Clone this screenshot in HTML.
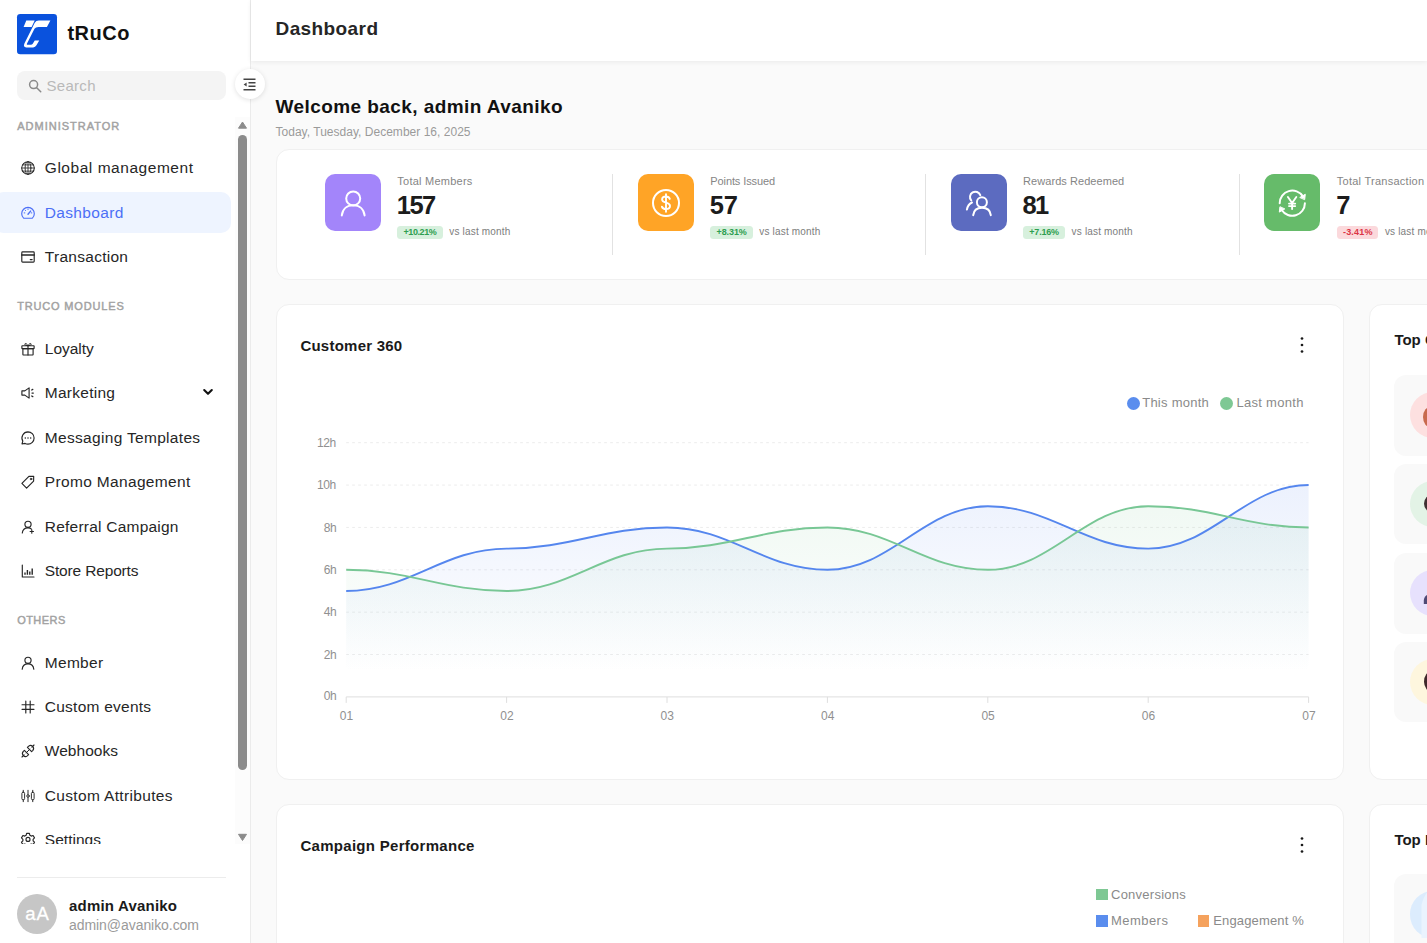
<!DOCTYPE html>
<html lang="en"><head><meta charset="utf-8"><title>tRuCo Dashboard</title>
<style>
*{box-sizing:border-box}
html,body{margin:0;padding:0}
body{width:1427px;height:943px;overflow:hidden;position:relative;background:#fafafa;font-family:"Liberation Sans",Arial,sans-serif;}
.t{position:absolute;white-space:pre;display:block}
.ic{position:absolute;display:block;overflow:visible}
#sb{position:absolute;left:0;top:0;width:251px;height:943px;background:#fff;border-right:1px solid #ebebeb;overflow:hidden}
#hd{position:absolute;left:251px;top:0;width:1176px;height:61px;background:#fff;box-shadow:0 1px 5px rgba(0,0,0,.07)}
.card{position:absolute;background:#fff;border:1px solid #f0f0f0;border-radius:13px}
</style></head>
<body>
<div id="sb">
<svg class="ic" style="left:17px;top:13.8px" width="40" height="40.300" viewBox="95 90 755 760">
<rect x="95" y="90" width="755" height="760" rx="62" fill="#0a52dd"/>
<polygon points="270,212 429,212 371,335 220,335" fill="#fff"/>
<path d="M725,212 L505,212 Q455,212 430,255 L235,645 Q205,715 270,720 L400,720 Q440,718 462,680 L515,590 L430,590 L392,650 Q382,668 355,668 L285,668 Q275,665 282,652 L425,370 Q445,335 500,335 L660,335 Z" fill="#fff"/></svg>
<span class="t" style="left:67.40px;top:18.97px;font-size:20px;line-height:28px;color:#111;font-weight:700;letter-spacing:0.504px;">tRuCo</span>
<div style="position:absolute;left:17px;top:70.600px;width:208.800px;height:29.700px;border-radius:8px;background:#f4f4f4"></div>
<svg class="ic" style="left:27.500px;top:78.500px" width="14" height="14" viewBox="0 0 14 14" fill="none" stroke="#8a8a8a" stroke-width="1.500" stroke-linecap="round"><circle cx="5.600" cy="5.600" r="4"/><path d="M8.700 8.700l4 4"/></svg>
<span class="t" style="left:46.50px;top:74.90px;font-size:15px;line-height:21px;color:#b9b9b9;letter-spacing:0.294px;">Search</span>
<span class="t" style="left:17.20px;top:118.79px;font-size:11px;line-height:15px;color:#a2a2a2;letter-spacing:1.004px;-webkit-text-stroke:.450px #a2a2a2;">ADMINISTRATOR</span>
<svg class="ic" style="left:21px;top:161.00px" width="14" height="14" viewBox="0 0 14 14" fill="none" stroke="#262626" stroke-width="1.15" stroke-linecap="round" stroke-linejoin="round"><circle cx="7" cy="7" r="6.3" stroke-width="1.050"/><ellipse cx="7" cy="7" rx="2.9" ry="6.3" stroke-width=".900"/><path d="M7 .7v12.6M.7 7h12.6M1.600 3.900h10.800M1.600 10.100h10.800" stroke-width=".850"/></svg>
<span class="t" style="left:44.80px;top:156.93px;font-size:15.5px;line-height:22px;color:#262626;letter-spacing:0.538px;">Global management</span>
<div style="position:absolute;left:-6px;top:192.1px;width:237px;height:40.800px;border-radius:10px;background:#eef4ff"></div>
<svg class="ic" style="left:21px;top:205.60px" width="14" height="14" viewBox="0 0 14 14" fill="none" stroke="#4c6ff6" stroke-width="1.15" stroke-linecap="round" stroke-linejoin="round"><path d="M2.6 12.2h8.8a6.3 6.3 0 1 0-8.8 0z"/><path d="M7 8.2l2.6-3.1" stroke-width="1.4"/><path d="M7 2.9v.6M3.2 6.9h.6M10.2 6.9h.6M4.2 4.2l.4.4" stroke-width="1"/></svg>
<span class="t" style="left:44.80px;top:201.53px;font-size:15.5px;line-height:22px;color:#4c6ff6;letter-spacing:0.334px;">Dashboard</span>
<svg class="ic" style="left:21px;top:250.00px" width="14" height="14" viewBox="0 0 14 14" fill="none" stroke="#262626" stroke-width="1.15" stroke-linecap="round" stroke-linejoin="round"><rect x=".8" y="1.9" width="12.4" height="10.2" rx=".8"/><path d="M.8 5h12.4" stroke-width="1.6"/><path d="M9.3 9.6h1.8" stroke-width="1.2"/></svg>
<span class="t" style="left:44.80px;top:245.93px;font-size:15.5px;line-height:22px;color:#262626;letter-spacing:0.279px;">Transaction</span>
<span class="t" style="left:17.20px;top:298.89px;font-size:11px;line-height:15px;color:#a2a2a2;letter-spacing:0.836px;-webkit-text-stroke:.450px #a2a2a2;">TRUCO MODULES</span>
<svg class="ic" style="left:21px;top:341.90px" width="14" height="14" viewBox="0 0 14 14" fill="none" stroke="#262626" stroke-width="1.15" stroke-linecap="round" stroke-linejoin="round"><rect x="1.9" y="6.6" width="10.2" height="6.4" rx=".4"/><rect x=".9" y="3.7" width="12.2" height="2.9" rx=".4"/><path d="M7 3.7v9.3"/><path d="M7 3.6C5.6 1 3.6 1 3.9 2.5 4.1 3.4 5.6 3.6 7 3.6 8.400 3.6 9.900 3.400 10.100 2.500 10.400 1 8.400 1 7 3.600z" stroke-width="1"/></svg>
<span class="t" style="left:44.80px;top:337.83px;font-size:15.5px;line-height:22px;color:#262626;letter-spacing:-0.021px;">Loyalty</span>
<svg class="ic" style="left:21px;top:386.00px" width="14" height="14" viewBox="0 0 14 14" fill="none" stroke="#262626" stroke-width="1.15" stroke-linecap="round" stroke-linejoin="round"><path d="M.9 4.9h2.9l4.300-3v10.200l-4.300-3H.9z"/><path d="M11 7h1.300M10.700 4l1.100-.650M10.700 10l1.100.650" stroke-width="1.250"/></svg>
<span class="t" style="left:44.80px;top:381.93px;font-size:15.5px;line-height:22px;color:#262626;letter-spacing:0.267px;">Marketing</span>
<svg class="ic" style="left:201.700px;top:387.100px" width="12" height="10" viewBox="0 0 12 10" fill="none" stroke="#111" stroke-width="2.100" stroke-linecap="round" stroke-linejoin="round"><path d="M2.200 3l3.800 3.800L9.800 3"/></svg>
<svg class="ic" style="left:21px;top:430.80px" width="14" height="14" viewBox="0 0 14 14" fill="none" stroke="#262626" stroke-width="1.15" stroke-linecap="round" stroke-linejoin="round"><path d="M7 .9a6.100 6.100 0 0 1 0 12.200 6.100 6.100 0 0 1-2.900-.700L1 13l.800-2.900A6.100 6.100 0 0 1 7 .900z"/><path d="M4.300 7h.01M7 7h.01M9.700 7h.01" stroke-width="1.500"/></svg>
<span class="t" style="left:44.80px;top:426.73px;font-size:15.5px;line-height:22px;color:#262626;letter-spacing:0.314px;">Messaging Templates</span>
<svg class="ic" style="left:21px;top:475.30px" width="14" height="14" viewBox="0 0 14 14" fill="none" stroke="#262626" stroke-width="1.15" stroke-linecap="round" stroke-linejoin="round"><path d="M.9 8.400 7.900 1.400l4.800-.1-.100 4.800-7 7z"/><circle cx="10" cy="4" r=".800" stroke-width="1"/></svg>
<span class="t" style="left:44.80px;top:471.23px;font-size:15.5px;line-height:22px;color:#262626;letter-spacing:0.338px;">Promo Management</span>
<svg class="ic" style="left:21px;top:519.80px" width="14" height="14" viewBox="0 0 14 14" fill="none" stroke="#262626" stroke-width="1.15" stroke-linecap="round" stroke-linejoin="round"><circle cx="7" cy="4.300" r="3.100"/><path d="M1.300 13c.300-3 2.600-5.100 5.700-5.100 1.400 0 2.600.400 3.500 1.200"/><path d="M10.800 9.800v3.400M9.100 11.500h3.400" stroke-width="1.100"/></svg>
<span class="t" style="left:44.80px;top:515.73px;font-size:15.5px;line-height:22px;color:#262626;letter-spacing:0.225px;">Referral Campaign</span>
<svg class="ic" style="left:21px;top:564.00px" width="14" height="14" viewBox="0 0 14 14" fill="none" stroke="#262626" stroke-width="1.15" stroke-linecap="round" stroke-linejoin="round"><path d="M1.300 1v12h11.700"/><path d="M4 10.700V8.600M6.400 10.700V5.900M8.800 10.700V7.400M11.200 10.700V4.600" stroke-width="1.400" stroke-linecap="butt"/></svg>
<span class="t" style="left:44.80px;top:559.93px;font-size:15.5px;line-height:22px;color:#262626;letter-spacing:-0.162px;">Store Reports</span>
<span class="t" style="left:17.20px;top:612.89px;font-size:11px;line-height:15px;color:#a2a2a2;letter-spacing:0.451px;-webkit-text-stroke:.450px #a2a2a2;">OTHERS</span>
<svg class="ic" style="left:21px;top:655.90px" width="14" height="14" viewBox="0 0 14 14" fill="none" stroke="#262626" stroke-width="1.15" stroke-linecap="round" stroke-linejoin="round"><circle cx="7" cy="4.300" r="3.100"/><path d="M1.200 13.200c.300-3.200 2.700-5.300 5.800-5.300s5.500 2.100 5.800 5.300"/></svg>
<span class="t" style="left:44.80px;top:651.83px;font-size:15.5px;line-height:22px;color:#262626;letter-spacing:0.288px;">Member</span>
<svg class="ic" style="left:21px;top:700.30px" width="14" height="14" viewBox="0 0 14 14" fill="none" stroke="#262626" stroke-width="1.15" stroke-linecap="round" stroke-linejoin="round"><path d="M4.800 1v12M9.200 1v12M1 4.700h12M1 9.300h12"/></svg>
<span class="t" style="left:44.80px;top:696.23px;font-size:15.5px;line-height:22px;color:#262626;letter-spacing:0.242px;">Custom events</span>
<svg class="ic" style="left:21px;top:744.30px" width="14" height="14" viewBox="0 0 14 14" fill="none" stroke="#262626" stroke-width="1.15" stroke-linecap="round" stroke-linejoin="round"><path d="M1 13l2.100-2.100"/><path d="M10.900 3.100L13 1"/><path d="M3.400 6.400l4.200 4.200-1.300 1.300a3 3 0 0 1-4.200-4.200z"/><path d="M10.600 7.600L6.400 3.400l1.300-1.300a3 3 0 0 1 4.200 4.200z"/><path d="M5.100 8.900l3.800-3.800" stroke-width="1"/></svg>
<span class="t" style="left:44.80px;top:740.23px;font-size:15.5px;line-height:22px;color:#262626;letter-spacing:0.035px;">Webhooks</span>
<svg class="ic" style="left:21px;top:788.60px" width="14" height="14" viewBox="0 0 14 14" fill="none" stroke="#262626" stroke-width="1.15" stroke-linecap="round" stroke-linejoin="round"><rect x=".900" y="3.200" width="2.700" height="7.600" rx="1.200" stroke-width=".950"/><path d="M2.250 1.300v1.900M2.250 10.800v1.900" stroke-width="1"/><circle cx="7" cy="7" r="1.250" stroke-width=".950"/><path d="M7 1.300v4.400M7 8.300v4.400" stroke-width="1"/><rect x="10.400" y="3.200" width="2.700" height="7.600" rx="1.200" stroke-width=".950"/><path d="M11.750 1.300v1.900M11.750 10.800v1.900" stroke-width="1"/></svg>
<span class="t" style="left:44.80px;top:784.53px;font-size:15.5px;line-height:22px;color:#262626;letter-spacing:0.336px;">Custom Attributes</span>
<svg class="ic" style="left:21px;top:833.00px" width="14" height="14" viewBox="0 0 14 14" fill="none" stroke="#262626" stroke-width="1.15" stroke-linecap="round" stroke-linejoin="round"><g transform="translate(0 -.900)"><circle cx="7" cy="7.300" r="2"/><path d="M5.600 1.300h2.800l.500 1.900 1.300.800 1.900-.600 1.400 2.400-1.400 1.400v1.500l1.400 1.400-1.400 2.400-1.900-.600-1.300.800-.500 1.900H5.600l-.500-1.900-1.300-.800-1.900.600L.500 10.100l1.400-1.400V7.200L.500 5.800l1.400-2.400 1.900.600 1.300-.800z"/></g></svg>
<span class="t" style="left:44.80px;top:828.93px;font-size:15.5px;line-height:22px;color:#262626;letter-spacing:0.026px;">Settings</span>
<div style="position:absolute;left:0;top:844.300px;width:250px;height:99px;background:#fff"></div>
<div style="position:absolute;left:235px;top:117px;width:15px;height:727.300px;background:#fcfcfc"></div>
<div style="position:absolute;left:238px;top:134.500px;width:9px;height:635.500px;border-radius:4.500px;background:#8b8b8b"></div>
<svg class="ic" style="left:237px;top:120px" width="11" height="10" viewBox="0 0 11 10"><path d="M1.500 8.200 5.500 2l4 6.200z" fill="#8b8b8b" stroke="#8b8b8b" stroke-width="1" stroke-linejoin="round"/></svg>
<svg class="ic" style="left:237px;top:831.500px" width="11" height="10" viewBox="0 0 11 10"><path d="M1.500 2.300 5.500 8.500l4-6.200z" fill="#8b8b8b" stroke="#8b8b8b" stroke-width="1" stroke-linejoin="round"/></svg>
<div style="position:absolute;left:17px;top:876.600px;width:209px;height:1px;background:#ececec"></div>
<div style="position:absolute;left:17px;top:893.800px;width:40px;height:40px;border-radius:50%;background:#c6c6c6"></div>
<span class="t" style="left:25.25px;top:900.89px;font-size:18.5px;line-height:26px;color:#fff;letter-spacing:0.859px;-webkit-text-stroke:.300px #fff;">aA</span>
<span class="t" style="left:69.00px;top:894.60px;font-size:15px;line-height:21px;color:#1a1a1a;font-weight:700;letter-spacing:0.201px;">admin Avaniko</span>
<span class="t" style="left:69.00px;top:914.95px;font-size:14px;line-height:20px;color:#9a9a9a;letter-spacing:-0.059px;">admin@avaniko.com</span>
</div>
<div id="hd"></div>
<span class="t" style="left:275.50px;top:15.22px;font-size:19px;line-height:27px;color:#262626;font-weight:700;letter-spacing:0.406px;">Dashboard</span>
<div style="position:absolute;left:235px;top:69.300px;width:30px;height:30px;border-radius:50%;background:#fff;box-shadow:0 1px 5px rgba(0,0,0,.12)"></div>
<svg class="ic" style="left:243.300px;top:78px" width="13" height="13" viewBox="0 0 13 13" fill="none" stroke="#444" stroke-width="1.350" stroke-linecap="butt"><path d="M.5 1.200h12M5.500 4.700h7M5.500 8.200h7M.5 11.700h12"/><path d="M3.600 4.400v4.100L.6 6.450z" fill="#444" stroke="none"/></svg>
<span class="t" style="left:275.50px;top:92.92px;font-size:19px;line-height:27px;color:#111;font-weight:700;letter-spacing:0.425px;">Welcome back, admin Avaniko</span>
<span class="t" style="left:275.50px;top:123.64px;font-size:12px;line-height:17px;color:#9a9a9a;letter-spacing:0.021px;">Today, Tuesday, December 16, 2025</span>
<div class="card" style="left:275.500px;top:149px;width:1200px;height:131px"></div>
<div style="position:absolute;left:324.7px;top:174px;width:56.300px;height:56.800px;border-radius:10px;background:#a385fa"></div>
<svg class="ic" style="left:335.9px;top:185.500px" width="34" height="34" viewBox="0 0 34 34" fill="none" stroke="#fff" stroke-width="2" stroke-linecap="round" stroke-linejoin="round"><circle cx="17.200" cy="12.400" r="7"/><path d="M5.800 29.400C6.500 23 11 19.200 17.200 19.200S27.900 23 28.600 29.400"/></svg>
<span class="t" style="left:397.30px;top:174.09px;font-size:11px;line-height:15px;color:#858585;letter-spacing:0.238px;">Total Members</span>
<span class="t" style="left:396.80px;top:186.76px;font-size:25.5px;line-height:36px;color:#1c1c1c;font-weight:700;letter-spacing:-1.523px;">157</span>
<div style="position:absolute;left:397.29999999999995px;top:225.800px;width:45.5px;height:13.100px;border-radius:3.500px;background:#d7f0dd"></div>
<span class="t" style="left:403.50px;top:225.98px;font-size:9px;line-height:13px;color:#2e9e50;font-weight:700;letter-spacing:-0.414px;">+10.21%</span>
<span class="t" style="left:449.30px;top:225.34px;font-size:10px;line-height:14px;color:#7d7d7d;letter-spacing:0.173px;">vs last month</span>
<div style="position:absolute;left:612.2px;top:174px;width:1px;height:81px;background:#e2e2e2"></div>
<div style="position:absolute;left:637.7px;top:174px;width:56.300px;height:56.800px;border-radius:10px;background:#ffa426"></div>
<svg class="ic" style="left:648.9px;top:185.500px" width="34" height="34" viewBox="0 0 34 34" fill="none" stroke="#fff" stroke-width="2" stroke-linecap="round" stroke-linejoin="round"><circle cx="17" cy="17" r="13"/><path d="M20.800 12.900c-.500-1.500-1.900-2.400-3.800-2.400-2.300 0-3.900 1.200-3.900 3 0 4.200 7.900 2.200 7.900 6.500 0 1.900-1.600 3.100-4 3.100-2.100 0-3.600-.900-4.100-2.500M17 8.200v17.600" stroke-width="1.900"/></svg>
<span class="t" style="left:710.30px;top:174.09px;font-size:11px;line-height:15px;color:#858585;letter-spacing:-0.104px;">Points Issued</span>
<span class="t" style="left:709.80px;top:186.76px;font-size:25.5px;line-height:36px;color:#1c1c1c;font-weight:700;letter-spacing:-0.175px;">57</span>
<div style="position:absolute;left:710.3000000000001px;top:225.800px;width:42.5px;height:13.100px;border-radius:3.500px;background:#d7f0dd"></div>
<span class="t" style="left:716.50px;top:225.98px;font-size:9px;line-height:13px;color:#2e9e50;font-weight:700;letter-spacing:-0.096px;">+8.31%</span>
<span class="t" style="left:759.30px;top:225.34px;font-size:10px;line-height:14px;color:#7d7d7d;letter-spacing:0.173px;">vs last month</span>
<div style="position:absolute;left:925.3px;top:174px;width:1px;height:81px;background:#e2e2e2"></div>
<div style="position:absolute;left:950.5px;top:174px;width:56.300px;height:56.800px;border-radius:10px;background:#5c6bc0"></div>
<svg class="ic" style="left:961.7px;top:185.500px" width="34" height="34" viewBox="0 0 34 34" fill="none" stroke="#fff" stroke-width="2" stroke-linecap="round" stroke-linejoin="round"><circle cx="19.900" cy="16.200" r="5"/><path d="M11.200 29.200C11.700 24.500 15.200 21.800 20 21.800S28.300 24.500 28.800 29.200"/><path d="M9.240 14.400A5.300 5.300 0 1 1 18.280 9.190"/><path d="M4.900 23.600C5.500 20.300 7.300 17.800 10 16.500"/></svg>
<span class="t" style="left:1023.10px;top:174.09px;font-size:11px;line-height:15px;color:#858585;letter-spacing:0.055px;">Rewards Redeemed</span>
<span class="t" style="left:1022.60px;top:186.76px;font-size:25.5px;line-height:36px;color:#1c1c1c;font-weight:700;letter-spacing:-1.875px;">81</span>
<div style="position:absolute;left:1023.1px;top:225.800px;width:42.0px;height:13.100px;border-radius:3.500px;background:#d7f0dd"></div>
<span class="t" style="left:1029.30px;top:225.98px;font-size:9px;line-height:13px;color:#2e9e50;font-weight:700;letter-spacing:-0.196px;">+7.16%</span>
<span class="t" style="left:1071.60px;top:225.34px;font-size:10px;line-height:14px;color:#7d7d7d;letter-spacing:0.173px;">vs last month</span>
<div style="position:absolute;left:1238.6px;top:174px;width:1px;height:81px;background:#e2e2e2"></div>
<div style="position:absolute;left:1264.2px;top:174px;width:56.300px;height:56.800px;border-radius:10px;background:#66bb6a"></div>
<svg class="ic" style="left:1275.4px;top:185.500px" width="34" height="34" viewBox="0 0 34 34" fill="none" stroke="#fff" stroke-width="2" stroke-linecap="round" stroke-linejoin="round"><path d="M4.700 17.200A12.600 12.600 0 0 1 27.900 10.400"/><path d="M29.900 17.200A12.600 12.600 0 0 1 6.700 24"/><path d="M29.700 13.300 30.300 8.300 25.100 11.300z" fill="#fff" stroke-width="1"/><path d="M4.900 21.100 4.300 26.100 9.500 23.100z" fill="#fff" stroke-width="1"/><path d="M12.900 11l4.200 6 4.200-6M17.100 17v6M14 17.600h6.200M14 20.100h6.200" stroke-width="1.900"/></svg>
<span class="t" style="left:1336.80px;top:174.09px;font-size:11px;line-height:15px;color:#858585;letter-spacing:0.259px;">Total Transaction</span>
<span class="t" style="left:1336.30px;top:186.76px;font-size:25.5px;line-height:36px;color:#1c1c1c;font-weight:700;">7</span>
<div style="position:absolute;left:1336.8px;top:225.800px;width:41.6px;height:13.100px;border-radius:3.500px;background:#fbd9dc"></div>
<span class="t" style="left:1343.00px;top:225.98px;font-size:9px;line-height:13px;color:#dc3545;font-weight:700;letter-spacing:0.174px;">-3.41%</span>
<span class="t" style="left:1384.90px;top:225.34px;font-size:10px;line-height:14px;color:#7d7d7d;letter-spacing:0.173px;">vs last month</span>
<div class="card" style="left:275.500px;top:304px;width:1068px;height:476px"></div>
<span class="t" style="left:300.40px;top:334.90px;font-size:15px;line-height:21px;color:#1a1a1a;font-weight:700;letter-spacing:0.235px;">Customer 360</span>
<svg class="ic" style="left:1299.4px;top:335.5px" width="6" height="18" viewBox="0 0 6 18" fill="#1a1a1a"><circle cx="3" cy="2.500" r="1.350"/><circle cx="3" cy="9" r="1.350"/><circle cx="3" cy="15.500" r="1.350"/></svg>
<svg class="ic" style="left:0;top:0" width="1427" height="943" viewBox="0 0 1427 943"><defs><linearGradient id="gb" gradientUnits="userSpaceOnUse" x1="0" y1="385" x2="0" y2="672"><stop offset="0" stop-color="#4f7fee" stop-opacity=".165"/><stop offset="1" stop-color="#4f7fee" stop-opacity="0"/></linearGradient><linearGradient id="gg" gradientUnits="userSpaceOnUse" x1="0" y1="385" x2="0" y2="672"><stop offset="0" stop-color="#6cc08a" stop-opacity=".170"/><stop offset="1" stop-color="#6cc08a" stop-opacity="0"/></linearGradient></defs><path d="M346.2,654.53H1308.6" stroke="#ececec" stroke-width="1" stroke-dasharray="2.700 3.300" fill="none"/><path d="M346.2,612.17H1308.6" stroke="#ececec" stroke-width="1" stroke-dasharray="2.700 3.300" fill="none"/><path d="M346.2,569.80H1308.6" stroke="#ececec" stroke-width="1" stroke-dasharray="2.700 3.300" fill="none"/><path d="M346.2,527.43H1308.6" stroke="#ececec" stroke-width="1" stroke-dasharray="2.700 3.300" fill="none"/><path d="M346.2,485.07H1308.6" stroke="#ececec" stroke-width="1" stroke-dasharray="2.700 3.300" fill="none"/><path d="M346.2,442.70H1308.6" stroke="#ececec" stroke-width="1" stroke-dasharray="2.700 3.300" fill="none"/><path d="M346.2,696.90H1308.6" stroke="#dedede" stroke-width="1" fill="none"/><path d="M346.20,696.90v6" stroke="#dedede" stroke-width="1" fill="none"/><path d="M506.60,696.90v6" stroke="#dedede" stroke-width="1" fill="none"/><path d="M667.00,696.90v6" stroke="#dedede" stroke-width="1" fill="none"/><path d="M827.40,696.90v6" stroke="#dedede" stroke-width="1" fill="none"/><path d="M987.80,696.90v6" stroke="#dedede" stroke-width="1" fill="none"/><path d="M1148.20,696.90v6" stroke="#dedede" stroke-width="1" fill="none"/><path d="M1308.60,696.90v6" stroke="#dedede" stroke-width="1" fill="none"/><path d="M346.20,590.98 C410.36,590.98 442.44,548.62 506.60,548.62 C570.76,548.62 602.84,527.43 667.00,527.43 C731.16,527.43 763.24,569.80 827.40,569.80 C891.56,569.80 923.64,506.25 987.80,506.25 C1051.96,506.25 1084.04,548.62 1148.20,548.62 C1212.36,548.62 1244.44,485.07 1308.60,485.07 L1308.60,696.90 L346.20,696.90 Z" fill="url(#gb)" stroke="none"/><path d="M346.20,569.80 C410.36,569.80 442.44,590.98 506.60,590.98 C570.76,590.98 602.84,548.62 667.00,548.62 C731.16,548.62 763.24,527.43 827.40,527.43 C891.56,527.43 923.64,569.80 987.80,569.80 C1051.96,569.80 1084.04,506.25 1148.20,506.25 C1212.36,506.25 1244.44,527.43 1308.60,527.43 L1308.60,696.90 L346.20,696.90 Z" fill="url(#gg)" stroke="none"/><path d="M346.20,590.98 C410.36,590.98 442.44,548.62 506.60,548.62 C570.76,548.62 602.84,527.43 667.00,527.43 C731.16,527.43 763.24,569.80 827.40,569.80 C891.56,569.80 923.64,506.25 987.80,506.25 C1051.96,506.25 1084.04,548.62 1148.20,548.62 C1212.36,548.62 1244.44,485.07 1308.60,485.07" fill="none" stroke="#5586ee" stroke-width="1.900"/><path d="M346.20,569.80 C410.36,569.80 442.44,590.98 506.60,590.98 C570.76,590.98 602.84,548.62 667.00,548.62 C731.16,548.62 763.24,527.43 827.40,527.43 C891.56,527.43 923.64,569.80 987.80,569.80 C1051.96,569.80 1084.04,506.25 1148.20,506.25 C1212.36,506.25 1244.44,527.43 1308.60,527.43" fill="none" stroke="#78c795" stroke-width="1.900"/></svg>
<span class="t" style="left:323.74px;top:688.04px;font-size:12px;line-height:17px;color:#909090;letter-spacing:-.400px;">0h</span>
<span class="t" style="left:323.74px;top:646.68px;font-size:12px;line-height:17px;color:#909090;letter-spacing:-.400px;">2h</span>
<span class="t" style="left:323.74px;top:604.31px;font-size:12px;line-height:17px;color:#909090;letter-spacing:-.400px;">4h</span>
<span class="t" style="left:323.74px;top:561.94px;font-size:12px;line-height:17px;color:#909090;letter-spacing:-.400px;">6h</span>
<span class="t" style="left:323.74px;top:519.58px;font-size:12px;line-height:17px;color:#909090;letter-spacing:-.400px;">8h</span>
<span class="t" style="left:317.07px;top:477.21px;font-size:12px;line-height:17px;color:#909090;letter-spacing:-.400px;">10h</span>
<span class="t" style="left:317.07px;top:434.84px;font-size:12px;line-height:17px;color:#909090;letter-spacing:-.400px;">12h</span>
<span class="t" style="left:339.82px;top:707.64px;font-size:12px;line-height:17px;color:#909090;">01</span>
<span class="t" style="left:500.22px;top:707.64px;font-size:12px;line-height:17px;color:#909090;">02</span>
<span class="t" style="left:660.62px;top:707.64px;font-size:12px;line-height:17px;color:#909090;">03</span>
<span class="t" style="left:821.02px;top:707.64px;font-size:12px;line-height:17px;color:#909090;">04</span>
<span class="t" style="left:981.42px;top:707.64px;font-size:12px;line-height:17px;color:#909090;">05</span>
<span class="t" style="left:1141.82px;top:707.64px;font-size:12px;line-height:17px;color:#909090;">06</span>
<span class="t" style="left:1302.22px;top:707.64px;font-size:12px;line-height:17px;color:#909090;">07</span>
<div style="position:absolute;left:1126.500px;top:396.800px;width:13px;height:13px;border-radius:50%;background:#5a8dee"></div>
<span class="t" style="left:1142.20px;top:394.30px;font-size:13px;line-height:18px;color:#8a8a8a;letter-spacing:0.254px;">This month</span>
<div style="position:absolute;left:1220.400px;top:396.800px;width:13px;height:13px;border-radius:50%;background:#7ec894"></div>
<span class="t" style="left:1236.50px;top:394.30px;font-size:13px;line-height:18px;color:#8a8a8a;letter-spacing:0.286px;">Last month</span>
<div class="card" style="left:1368.500px;top:304px;width:200px;height:476px"></div>
<span class="t" style="left:1394.40px;top:329.10px;font-size:15px;line-height:21px;color:#1a1a1a;font-weight:700;white-space:nowrap;">Top Customers</span>
<div style="position:absolute;left:1393.600px;top:375.0px;width:120px;height:80.600px;border-radius:12px;background:#f9f9f9"></div>
<div style="position:absolute;left:1409.600px;top:391.8px;width:46.700px;height:46.700px;border-radius:50%;background:#fde0e0"></div>
<div style="position:absolute;left:1393.600px;top:463.7px;width:120px;height:80.600px;border-radius:12px;background:#f9f9f9"></div>
<div style="position:absolute;left:1409.600px;top:480.5px;width:46.700px;height:46.700px;border-radius:50%;background:#e3f3e6"></div>
<div style="position:absolute;left:1393.600px;top:553.0px;width:120px;height:80.600px;border-radius:12px;background:#f9f9f9"></div>
<div style="position:absolute;left:1409.600px;top:569.8px;width:46.700px;height:46.700px;border-radius:50%;background:#e7e1fd"></div>
<div style="position:absolute;left:1393.600px;top:641.7px;width:120px;height:80.600px;border-radius:12px;background:#f9f9f9"></div>
<div style="position:absolute;left:1409.600px;top:658.5px;width:46.700px;height:46.700px;border-radius:50%;background:#fef6de"></div>
<div class="card" style="left:275.500px;top:804px;width:1068px;height:300px"></div>
<span class="t" style="left:300.40px;top:834.70px;font-size:15px;line-height:21px;color:#1a1a1a;font-weight:700;letter-spacing:0.295px;">Campaign Performance</span>
<svg class="ic" style="left:1299.4px;top:835.5px" width="6" height="18" viewBox="0 0 6 18" fill="#1a1a1a"><circle cx="3" cy="2.500" r="1.350"/><circle cx="3" cy="9" r="1.350"/><circle cx="3" cy="15.500" r="1.350"/></svg>
<div style="position:absolute;left:1096px;top:889.2px;width:11.700px;height:11.300px;background:#7ec894"></div>
<span class="t" style="left:1111.00px;top:885.90px;font-size:13px;line-height:18px;color:#8a8a8a;letter-spacing:0.253px;">Conversions</span>
<div style="position:absolute;left:1096px;top:915.4px;width:11.700px;height:11.300px;background:#5a8dee"></div>
<span class="t" style="left:1111.00px;top:912.20px;font-size:13px;line-height:18px;color:#8a8a8a;letter-spacing:0.452px;">Members</span>
<div style="position:absolute;left:1197.8px;top:915.4px;width:11.700px;height:11.300px;background:#f5a25d"></div>
<span class="t" style="left:1213.20px;top:912.20px;font-size:13px;line-height:18px;color:#8a8a8a;letter-spacing:0.154px;">Engagement %</span>
<div class="card" style="left:1368.500px;top:804px;width:200px;height:300px"></div>
<span class="t" style="left:1394.40px;top:828.80px;font-size:15px;line-height:21px;color:#1a1a1a;font-weight:700;white-space:nowrap;">Top Rewards</span>
<div style="position:absolute;left:1393.600px;top:874.200px;width:120px;height:80.600px;border-radius:12px;background:#f9f9f9"></div>
<div style="position:absolute;left:1409.600px;top:891px;width:46.700px;height:46.700px;border-radius:50%;background:#dcecfd"></div>
<svg class="ic" style="left:0;top:0" width="1427" height="943" viewBox="0 0 1427 943"><ellipse cx="1431" cy="417" rx="8" ry="10.500" fill="#c86a4e"/><ellipse cx="1431.500" cy="416.500" rx="4.500" ry="6.500" fill="#e4ab98"/><ellipse cx="1431.800" cy="503.500" rx="7.800" ry="8.600" fill="#3f2f31"/><path d="M1423.800 604v-4c.500-2.800 1.800-4.600 3.500-5.200v9.200z" fill="#4f4975"/><ellipse cx="1431.800" cy="681.500" rx="7.800" ry="10.400" fill="#3e282a"/><path d="M1421.500 938V905c1.500-6 3.500-10 6-13v46z" fill="#eaf3fe"/></svg>
</body></html>
